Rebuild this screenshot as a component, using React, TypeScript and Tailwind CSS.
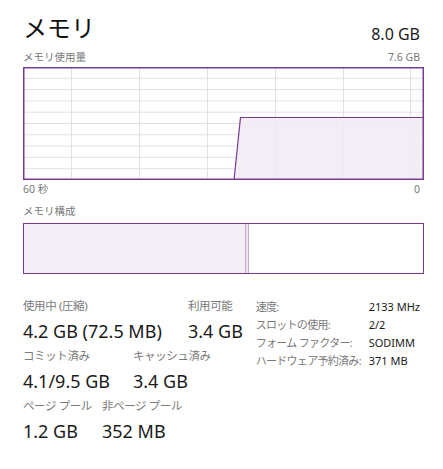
const font = { fontFamily: '"Noto Sans", "Noto Sans CJK JP", sans-serif' }

function UsageGraph() {
  const w = 401
  const h = 113
  const cols = [48, 116, 184, 252, 320, 387]
  const rows = Array.from({ length: 9 }, (_, i) => ((i + 1) * h) / 10)
  return (
    <svg width={w} height={h} viewBox={`0 0 ${w} ${h}`} className="block">
      <rect x="0" y="0" width={w} height={h} fill="#ffffff" />
      {rows.map((y) => (
        <line key={y} x1="0" x2={w} y1={y} y2={y} stroke="#e6dee8" strokeWidth="1" />
      ))}
      {cols.map((x) => (
        <line key={x} x1={x + 0.5} x2={x + 0.5} y1="0" y2={h} stroke="#e6dee8" strokeWidth="1" />
      ))}
      <polygon points={`211,${h} 217.5,50.5 ${w},50.5 ${w},${h}`} fill="#f1ebf3" fillOpacity="0.85" />
      <polyline points={`211,${h} 217.5,50.5 ${w},50.5`} fill="none" stroke="#7b3a94" strokeWidth="1.2" />
      <rect x="0.75" y="0.75" width={w - 1.5} height={h - 1.5} fill="none" stroke="#7b3a94" strokeWidth="1.5" />
    </svg>
  )
}

function Stat({ label, value, className = "" }: { label: string; value: string; className?: string }) {
  return (
    <div className={className}>
      <div className="whitespace-nowrap text-[11.5px] leading-[16px] tracking-[-0.4px] text-[#7a7a7a]">{label}</div>
      <div className="mt-[5px] whitespace-nowrap text-[18px] leading-[24px] text-[#1a1a1a]">{value}</div>
    </div>
  )
}

const specs = [
  ["速度:", "2133 MHz"],
  ["スロットの使用:", "2/2"],
  ["フォーム ファクター:", "SODIMM"],
  ["ハードウェア予約済み:", "371 MB"],
]

export default function App() {
  return (
    <div className="h-[469px] w-[443px] bg-white px-[23px] pt-[10px]" style={font}>
      <div className="flex items-end justify-between">
        <h1 className="text-[24px] leading-[36px] font-normal text-[#111]">メモリ</h1>
        <span className="mb-[1px] text-[16px] leading-[22px] text-[#1a1a1a]">8.0 GB</span>
      </div>
      <div className="mt-[3px] flex justify-between text-[10.5px] leading-[16px] text-[#777]">
        <span>メモリ使用量</span>
        <span>7.6 GB</span>
      </div>
      <div className="mt-[2px]">
        <UsageGraph />
      </div>
      <div className="mt-[1px] flex justify-between text-[10.5px] leading-[16px] text-[#777]">
        <span>60 秒</span>
        <span>0</span>
      </div>
      <div className="mt-[6px] text-[10.5px] leading-[16px] text-[#777]">メモリ構成</div>
      <div className="mt-[4px] flex h-[51px] w-[401px] border-[1.5px] border-[#7b3a94] bg-white">
        <div className="w-[221px] bg-[#f3eef5]" />
        <div className="w-[4px] border-x border-[#c9a9d3] bg-[#ece3ef]" />
        <div className="flex-1" />
      </div>

      <div className="mt-[24px] flex">
        <div className="w-[233px]">
          <div className="flex">
            <Stat label="使用中 (圧縮)" value="4.2 GB (72.5 MB)" className="w-[165px]" />
            <Stat label="利用可能" value="3.4 GB" />
          </div>
          <div className="mt-[5px] flex">
            <Stat label="コミット済み" value="4.1/9.5 GB" className="w-[110px]" />
            <Stat label="キャッシュ済み" value="3.4 GB" />
          </div>
          <div className="mt-[5px] flex">
            <Stat label="ページ プール" value="1.2 GB" className="w-[79px]" />
            <Stat label="非ページ プール" value="352 MB" />
          </div>
        </div>
        <div className="flex flex-col text-[11px] leading-[18px]">
          {specs.map(([k, v]) => (
            <div key={k} className="flex whitespace-nowrap">
              <span className="w-[113px] tracking-[-0.7px] text-[#7a7a7a]">{k}</span>
              <span className="text-[#1a1a1a]">{v}</span>
            </div>
          ))}
        </div>
      </div>
    </div>
  )
}
